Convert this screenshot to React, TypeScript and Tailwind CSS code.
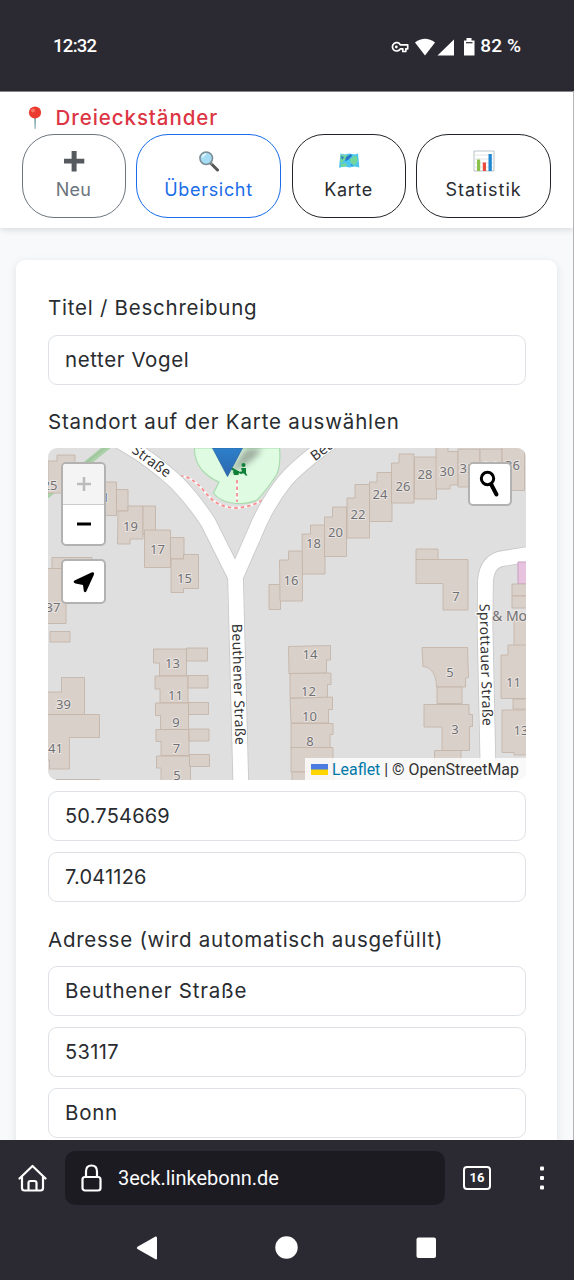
import React from "react";

const BUILDINGS: string[] = [
  // north-west row
  "M48 461h9V455h18V493H48z",
  "M104 482h12.500V515.500h-12.500z",
  "M116.500 489.500h11.500v21.500h-11.500z",
  "M118 511h10v-5h15v33h-13v5h-12.500z",
  "M143 506h12.500v28.500h-12.500z",
  "M144.500 530h26v37.500h-26z",
  "M170.500 537.500h13.500v21.500h-13.500z",
  "M171 559h12.500v-4.500h15v34h-15v4h-12.500z",
  "M52 557.500h40v11h-40z",
  "M46 568.500h20v55h-20z",
  "M50 631.500h20v10.500h-20z",
  "M46 692h15.500v-14.500h23v37h-38.500z",
  "M46 714.500h53.500v23h-30v31.500h-20v-9h-3.500z",
  "M56 779.500h44v6h-44z",
  // odd numbers, centre-left
  "M153.500 649h33v27h-27v-13h-6z",
  "M186.500 648h21v13h-21z",
  "M155 676h33v27h-28v-14h-5z",
  "M188 675.500h20v12.500h-20z",
  "M155.500 703h33v26.500h-28v-14h-5z",
  "M188.500 702.500h20v12h-20z",
  "M156 729.500h33v26h-28v-14h-5z",
  "M189 729h20v12h-20z",
  "M156.500 756h34v28h-29.500v-16h-4.500z",
  "M189.500 754.500h20v12h-20z",
  // even numbers, diagonal row
  "M269 584.500h11.500v25h-11.500z",
  "M279.500 560h9v-9h14v50h-22.500z",
  "M302 534h8.500v-9h14.500v49h-22.500z",
  "M324.500 517h8v-10h14v49.500h-22z",
  "M347 498h8v-13.500h14.500v53.500h-22.500z",
  "M369.500 482h7.500v-9.500h15v49h-22.500z",
  "M391.500 463h7.500v-9h15v49h-22.500z",
  "M414.500 457h22v42h-22z",
  "M436 445h12v6.500h10V485h-8v4h-14z",
  "M458 449h22v38h-22z",
  "M480 449h22v40h-22z",
  "M502 446h22.500v44.500h-22.500z",
  // even numbers, centre
  "M288.500 646.500l42-1v14.500h-4v13l-37.500 1z",
  "M290 673.500l41-.500v11.500h-3.500v14l-37.500-.500z",
  "M290 698.500l42.500-1.500v12.500h-4v13.500h-37.500z",
  "M291 723.500h42v11h-3v13l-39 .500z",
  "M291 747.500h42v24.500h-42z",
  "M292 772h42v12h-42z",
  // east side
  "M416 549h22v11h-22z",
  "M416 559.500h52v50.500h-25v-26.500h-27z",
  "M422 647.500h45.500l1 30-3 .500v9h-29c0-12-5-20-13.500-20.500z",
  "M437 687h25v16.500h-25z",
  "M424 704.500h45v10h3.500v12h-3v24h-27.500v-23.500h-18z",
  "M434.500 750.500h26.500v20h-26.500z",
  "M512 584h16v12h-16z",
  "M512 596h16v12h-16z",
  "M514 620h14v26h-14z",
  "M501 655h7v-10h20v53.500h-27z",
  "M513 699h15v10h-15z",
  "M502 710h26v45h-14v-2.500h-12z",
];

const NUMBERS: [string, number, number][] = [
  ["25", 50, 489.500], ["21", 102, 501.500], ["19", 130.500, 530.500], ["17", 157.500, 553.500], ["15", 184.500, 582.500],
  ["37", 53, 612], ["39", 63.500, 708.500], ["41", 55.500, 753],
  ["13", 172.500, 667.500], ["11", 175.500, 700], ["9", 176, 727], ["7", 176.500, 752.500], ["5", 177, 779.500],
  ["16", 291, 585], ["18", 313.500, 548], ["20", 335.500, 537], ["22", 358, 519], ["24", 380, 499],
  ["26", 403, 491], ["28", 425, 479], ["30", 447, 476], ["32", 467, 472.500], ["34", 490, 471], ["36", 512.500, 470],
  ["7", 456, 601], ["5", 450, 676.500], ["3", 455, 734],
  ["14", 310, 658.500], ["12", 308.500, 696], ["10", 309.500, 721], ["8", 310, 746],
  ["11", 513.500, 687], ["13", 521, 735],
];

const ROADS = [
  "M108 434L128 446Q152 460 176 482Q193 499 208 522L235.500 577L236.500 616L241 790",
  "M235.500 577L260 521Q270 500 284 482Q297 466 333 440",
  "M534 553.500L500 559Q487 563 485.500 580L485 625L488.500 790",
];

function MapArt() {
  return (
    <svg className="block h-full w-full" viewBox="48 448 478 332" fontFamily="'Noto Sans', sans-serif">
      <defs>
        <linearGradient id="pin" x1="0" y1="0" x2="0" y2="1">
          <stop offset="0" stopColor="#2c7fca" />
          <stop offset="1" stopColor="#2c68ae" />
        </linearGradient>
        <filter id="soft" x="-50%" y="-50%" width="200%" height="200%">
          <feGaussianBlur stdDeviation="3" />
        </filter>
      </defs>
      <rect x="48" y="448" width="478" height="332" fill="#dfdfdf" />
      <path d="M40 501L112 443" stroke="#aad0a8" strokeWidth="6" />
      <path d="M40 500L112 442" stroke="#9fc39e" strokeWidth="1.500" />
      <path
        d="M194.500 448Q194 460 202 470Q209 478 219 482L213.500 493Q220 502 236 503.500Q249 504 257 500Q266 491 277 474Q281 464 279.500 448z"
        fill="#dffce2"
        stroke="#a9dcae"
        strokeWidth="1.200"
      />
      <g fill="none" stroke="#fff" strokeWidth="2.500" opacity=".7">
        <path d="M180 476Q192 476 204 491Q217 508 236 508Q254 507 269 496M237 480V502" />
      </g>
      <g fill="none" stroke="#f78f8f" strokeWidth="1.800" strokeDasharray="3.500 3">
        <path d="M180 476Q192 476 204 491Q217 508 236 508Q254 507 269 496M237 480V502" />
      </g>
      <g fill="none" strokeLinejoin="round">
        {ROADS.map((d) => <path key={d} d={d} stroke="#c9c9c9" strokeWidth="16.500" />)}
        {ROADS.map((d) => <path key={d} d={d} stroke="#fff" strokeWidth="14.800" />)}
      </g>
      <path d="M518 562h12v22h-12z" fill="#e8c3e0" stroke="#c79dc0" />
      <g fill="#d9d0c9" stroke="#c5b5a9" strokeWidth=".9">
        {BUILDINGS.map((d) => <path key={d} d={d} />)}
      </g>
      <g fontSize="13" fill="#707074" stroke="#e9e4e0" strokeWidth="2" paintOrder="stroke" textAnchor="middle">
        {NUMBERS.map(([n, x, y]) => <text key={n + x} x={x} y={y}>{n}</text>)}
        <text x="492" y="621" textAnchor="start" fontSize="14">&amp; Mo</text>
      </g>
      <g fontSize="14" fill="#333" stroke="#fff" strokeWidth="2" paintOrder="stroke">
        <text transform="translate(131 452) rotate(36)" textLength="44">Straße</text>
        <text transform="translate(315 461.500) rotate(-37)">Beuthener</text>
        <text transform="translate(232 624) rotate(88.300)" textLength="121">Beuthener Straße</text>
        <text transform="translate(479.500 604) rotate(88.500)" textLength="122">Sprottauer Straße</text>
      </g>
      <path d="M228 474L246 448H262Q256 462 228 474z" fill="#555" opacity=".45" filter="url(#soft)" />
      <g fill="#0f8038">
        <circle cx="243.500" cy="465" r="2" />
        <path d="M241 468h5v5l1.500 2.500h-2l-1.500-2h-3l-1-2h2zM234 470l5 1-.5 4H234l-1-3zM231 467l11 6-.5 1.200-11-5z" />
      </g>
      <path d="M212.500 448H242.500L227.500 476.500z" fill="url(#pin)" stroke="#2b69a5" strokeWidth=".8" />
    </svg>
  );
}

function Pin() {
  return (
    <svg className="h-[24px] w-[18px]" viewBox="0 0 18 24">
      <path d="M8.200 11h1.800l-.4 11.500q-.5 1-1 0z" fill="#7aa3ab" />
      <circle cx="9" cy="6.500" r="6.100" fill="#ea3b2e" />
      <circle cx="7" cy="4.500" r="2" fill="#f77668" />
    </svg>
  );
}

function Plus() {
  return (
    <svg className="h-[22px] w-[22px]" viewBox="0 0 22 22">
      <path d="M8.600 1h5v7.800h7.700v4.700h-7.700v8.100h-5v-8.100H1V8.800h7.600z" fill="#56595d" />
    </svg>
  );
}

function Magnifier() {
  return (
    <svg className="h-[22px] w-[22px]" viewBox="0 0 22 22">
      <path d="M12.500 13l7 7" stroke="#555" strokeWidth="3" strokeLinecap="round" />
      <path d="M12 12l2.500 2.500" stroke="#888" strokeWidth="2" />
      <circle cx="8.200" cy="8.200" r="6.300" fill="#a5dcf3" stroke="#7b8a91" strokeWidth="1.500" />
      <path d="M4.500 7.500Q5 4.500 8 4" stroke="#e2f7ff" strokeWidth="1.600" fill="none" />
    </svg>
  );
}

function WorldMap() {
  return (
    <svg className="h-[22px] w-[22px]" viewBox="0 0 22 22">
      <path d="M2.500 3.500l4 1 5-1 5 1 3.500-1 1.300 14-4.800-1-5 1-5-1L1 17.800z" fill="#4cc6ee" />
      <path d="M3 4.500l4 .8 3-.5-1 4-3 1.500-2 3-2-2zM12 9l4-3 3 .500.500 5-3 4-4-3zM3 14l5-1 1 3-6 1z" fill="#72d69a" />
      <path d="M8 7l5-3 1 2-4 4-3 1zM3 6l3 1-2 3zM12 14l3 1-1 1z" fill="#2874c8" />
    </svg>
  );
}

function BarChart() {
  return (
    <svg className="h-[22px] w-[22px]" viewBox="0 0 22 22">
      <path d="M1 1h20v20H1z" fill="#fff" stroke="#b9c3c8" />
      <path d="M1.500 5h19M1.500 9h19M1.500 13h19M1.500 17h19" stroke="#e0e4e6" />
      <path d="M4 9.500h3.200V21H4z" fill="#8bc24c" />
      <path d="M9.800 12.500H13V21H9.800z" fill="#ea4b3c" />
      <path d="M15.500 4h3.300v17h-3.300z" fill="#1e88d2" />
    </svg>
  );
}

function NavButton({ box, label, children }: { box: string; label: string; children: React.ReactNode }) {
  return (
    <button className={`flex h-[84px] shrink-0 flex-col items-center rounded-[32px] border-[1.300px] pt-[15.500px] ${box}`}>
      {children}
      <span className="mt-[3.500px] whitespace-nowrap text-[18px] leading-[28px]">{label}</span>
    </button>
  );
}

function Field({ value, gap, spacing }: { value: string; gap: string; spacing: string }) {
  return (
    <div className={`flex h-[50px] shrink-0 items-center rounded-[9px] border border-[#dee2e6] bg-white pl-[16px] ${gap}`}>
      <span className={spacing}>{value}</span>
    </div>
  );
}

export default function App() {
  return (
    <div className="relative flex h-[1280px] w-[574px] flex-col overflow-hidden bg-[#f8f9fa] font-['Inter',sans-serif] text-[#292c30]">
      <div className="flex h-[91px] shrink-0 items-center justify-between bg-[#2b2a33] pl-[53px] pr-[53px] pt-[2px] font-['Roboto',sans-serif] text-[18.500px] font-medium text-white">
        <span className="tracking-[-0.700px]">12:32</span>
        <div className="flex items-center">
          <svg className="h-[20px] w-[86px]" viewBox="391 36 86 20">
            <g fill="none" stroke="#fff" strokeWidth="1.700">
              <path d="M400.300 43.800H407.700V47.800H405.800V50.500H402.800V47.800H400.300A4.200 4.200 0 1 1 400.300 43.800Z" strokeLinejoin="round" />
            </g>
            <circle cx="396.300" cy="46" r="1.400" fill="#fff" />
            <path d="M415 41.500Q425 34 435 41.500L425 54.500z" fill="#fff" />
            <path d="M437.500 54.500L454 38.500V54.500z" fill="#fff" />
            <path d="M464 39.500h2.500V37h5v2.500h3V54.500H464z" fill="#fff" />
            <path d="M466 41.700h6.500" stroke="#2b2a33" strokeWidth="1.200" />
          </svg>
          <span className="ml-[3px] text-[19px] tracking-[0.100px]">82 %</span>
        </div>
      </div>

      <header className="z-10 flex h-[137px] shrink-0 flex-col border-t border-[#85858a] bg-white pl-[21.500px] shadow-[0_2px_6px_rgba(0,0,0,0.12)]">
        <div className="mt-[12px] flex h-[28px] items-center gap-[12px] pl-[4px] text-[20.500px] font-medium text-[#dc3545]">
          <Pin />
          <span className="tracking-[0.930px]">Dreieckständer</span>
        </div>
        <nav className="mt-[1.500px] flex gap-[10.500px]">
          <NavButton box="w-[104px] border-[#6c757d] text-[#6c757d] tracking-[0.300px]" label="Neu"><Plus /></NavButton>
          <NavButton box="w-[145px] border-[#1a6ce8] text-[#1a6ce8] tracking-[0.680px]" label="Übersicht"><Magnifier /></NavButton>
          <NavButton box="w-[114px] border-[#212529] tracking-[0.600px]" label="Karte"><WorldMap /></NavButton>
          <NavButton box="w-[135px] border-[#212529] tracking-[0.950px]" label="Statistik"><BarChart /></NavButton>
        </nav>
      </header>

      <main className="flex min-h-0 flex-1 flex-col overflow-hidden pl-[16px] pt-[32px]">
        <section className="flex h-[900px] w-[541px] shrink-0 flex-col rounded-t-[9px] bg-white pl-[32px] pr-[31px] text-[20.500px] shadow-[0_2px_8px_rgba(0,0,0,0.1)]">
          <label className="mt-[32px] h-[32px] leading-[32px] tracking-[0.760px]">Titel / Beschreibung</label>
          <Field value="netter Vogel" gap="mt-[11px]" spacing="tracking-[0.600px]" />
          <label className="mt-[21px] h-[32px] leading-[32px] tracking-[0.820px]">Standort auf der Karte auswählen</label>
          <div className="relative mt-[10px] h-[332px] shrink-0 overflow-hidden rounded-[9px]">
            <MapArt />
            <div className="absolute left-[13px] top-[14px] flex h-[84px] w-[45px] flex-col overflow-hidden rounded-[5px] border-2 border-[#b3b2b0] bg-white">
              <div className="flex flex-1 items-center justify-center border-b border-[#ccc] bg-[#f4f4f4]">
                <svg className="h-[16px] w-[16px]" viewBox="0 0 16 16"><path d="M8 1v14M1 8h14" stroke="#bbb" strokeWidth="2.500" /></svg>
              </div>
              <div className="flex flex-1 items-center justify-center">
                <svg className="h-[16px] w-[16px]" viewBox="0 0 16 16"><path d="M1 8h14" stroke="#000" strokeWidth="3" /></svg>
              </div>
            </div>
            <div className="absolute left-[13px] top-[111px] flex h-[45px] w-[45px] items-center justify-center rounded-[5px] border-2 border-[#b3b2b0] bg-white">
              <svg className="h-[24px] w-[24px]" viewBox="0 0 24 24"><path d="M19.500 2.500Q22.500 1.500 22 4.500L14.500 21Q13 23.500 11.800 21L11 15L3.500 13.500Q0 12 3 10.300z" fill="#000" /></svg>
            </div>
            <div className="absolute left-[420px] top-[14px] flex h-[44px] w-[44px] items-center justify-center rounded-[5px] border-2 border-[#b3b2b0] bg-white">
              <svg className="h-[28px] w-[24px]" viewBox="0 0 24 28"><circle cx="9.500" cy="8.500" r="6.200" fill="none" stroke="#000" strokeWidth="3" /><path d="M13 14l5.500 10.500" stroke="#000" strokeWidth="4" strokeLinecap="round" /></svg>
            </div>
            <div className="absolute bottom-0 right-0 flex h-[22px] w-[221px] items-center whitespace-nowrap bg-white/80 pl-[6px] pt-[1px] font-['Roboto',sans-serif] text-[15.900px] text-[#333]">
              <svg className="mr-[4px] h-[11px] w-[17px]" viewBox="0 0 17 11"><path d="M0 0h17v6H0z" fill="#4c7be1" /><path d="M0 5.500h17V11H0z" fill="#ffd500" /></svg>
              <span><span className="text-[#0078a8]">Leaflet</span> | © OpenStreetMap</span>
            </div>
          </div>
          <Field value="50.754669" gap="mt-[11px]" spacing="text-[20px] tracking-[0.200px]" />
          <Field value="7.041126" gap="mt-[11px]" spacing="text-[20px] tracking-[0.200px]" />
          <label className="mt-[22px] h-[32px] leading-[32px] tracking-[0.750px]">Adresse (wird automatisch ausgefüllt)</label>
          <Field value="Beuthener Straße" gap="mt-[10px]" spacing="tracking-[0.800px]" />
          <Field value="53117" gap="mt-[11px]" spacing="text-[20px] tracking-[0.350px]" />
          <Field value="Bonn" gap="mt-[11px]" spacing="tracking-[0.750px]" />
        </section>
      </main>

      <footer className="z-10 flex h-[140px] shrink-0 flex-col bg-[#2b2a33] text-white">
        <div className="mt-[11px] flex h-[54px] items-center">
          <svg className="ml-[18px] h-[28px] w-[29px]" viewBox="0 0 29 28" fill="none" stroke="#fff" strokeWidth="2.200" strokeLinecap="round" strokeLinejoin="round">
            <path d="M1.500 14.500L14.500 2L27.500 14.500M4 12.500V24Q4 26.500 6.500 26.500H22.500Q25 26.500 25 24V12.500" />
            <path d="M10.500 26V19Q10.500 17 12.500 17H16.500Q18.500 17 18.500 19V26" />
          </svg>
          <div className="ml-[17.500px] flex h-[54px] w-[380px] items-center rounded-[10px] bg-[#1c1b22] pl-[16px] font-['Roboto',sans-serif] text-[20px] text-[#fbfbfe]">
            <svg className="h-[28px] w-[21px]" viewBox="0 0 21 28" fill="none" stroke="#fff" strokeWidth="2.200">
              <rect x="1.500" y="13" width="18" height="13.500" rx="2.500" />
              <path d="M5 13V7.500Q5 1.500 10.500 1.500T16 7.500V13" />
            </svg>
            <span className="ml-[16.500px]">3eck.linkebonn.de</span>
          </div>
          <div className="ml-[18.500px] flex h-[24px] w-[28px] items-center justify-center rounded-[4px] border-2 border-white font-['Roboto',sans-serif] text-[13px] font-bold">16</div>
          <svg className="ml-[46.500px] h-[24px] w-[8px]" viewBox="0 0 8 24" fill="#fff"><rect x="2" y=".5" width="4" height="4" rx="1" /><rect x="2" y="10" width="4" height="4" rx="1" /><rect x="2" y="19.500" width="4" height="4" rx="1" /></svg>
        </div>
        <svg className="mt-[30px] h-[26px] w-[574px]" viewBox="0 0 574 26" fill="#fff">
          <path d="M155.500 1.500Q157 1 157 3V23Q157 25 155.500 24.300L137.500 14Q136 13 137.500 11.800z" />
          <ellipse cx="286.500" cy="12.500" rx="11.200" ry="11.200" />
          <rect x="416.500" y="2.500" width="19.500" height="20.500" rx="2" />
        </svg>
      </footer>
      <div className="absolute right-0 top-[91px] z-20 h-[1049px] w-px bg-[#b4b4b7]" />
    </div>
  );
}
